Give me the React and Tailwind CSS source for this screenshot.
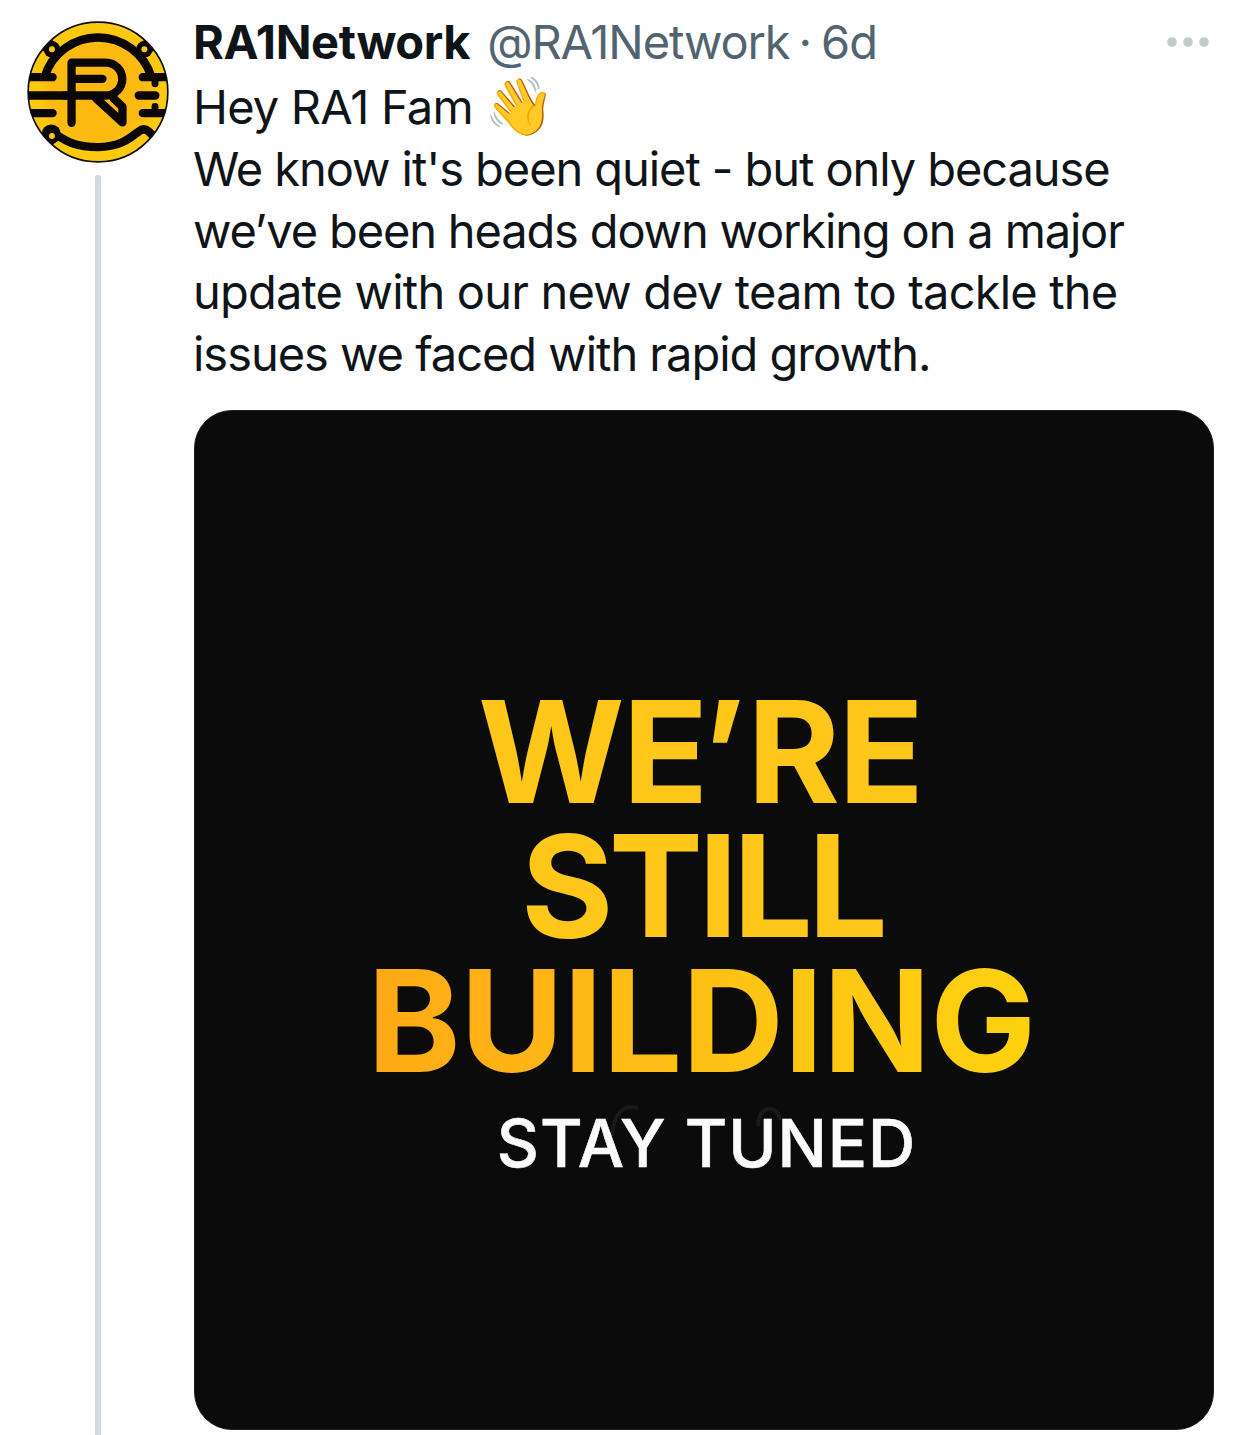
import React from 'react';

const tweet = {
  name: 'RA1Network',
  handle: '@RA1Network',
  time: '6d',
};

const bodyLines = [
  { text: "We know it's been quiet - but only because", tracking: 'tracking-[-1.07px]' },
  { text: 'we’ve been heads down working on a major', tracking: 'tracking-[-1.15px]' },
  { text: 'update with our new dev team to tackle the', tracking: 'tracking-[-0.81px]' },
  { text: 'issues we faced with rapid growth.', tracking: 'tracking-[-1.03px]' },
];

const Avatar = () => (
  <svg viewBox="36 32 427 427" className="w-[142px] h-[142px] shrink-0" role="img" aria-label="RA1Network">
    <defs>
      <radialGradient id="coin" cx="249" cy="245" r="212" gradientUnits="userSpaceOnUse">
        <stop offset="0" stopColor="#ffb60d" />
        <stop offset="0.68" stopColor="#fdbb12" />
        <stop offset="0.85" stopColor="#fdc90f" />
        <stop offset="1" stopColor="#fcca12" />
      </radialGradient>
      <clipPath id="coinClip">
        <circle cx="249.5" cy="245.5" r="210" />
      </clipPath>
    </defs>
    <circle cx="249.5" cy="245.5" r="210" fill="url(#coin)" />
    <g clipPath="url(#coinClip)" fill="none" stroke="#0a0706" strokeWidth="25" strokeLinecap="round" strokeLinejoin="round">
      {/* ring */}
      <path d="M89 200 A168 168 0 0 1 410 200" />
      <path d="M111 366 C150 390 175 411 249 411 C315 411 345 385 372 364 C382 356 392 356 402 364 L425 386" />
      <path d="M111 117 L84 92 M389 117 L416 92 M111 378 L84 403" strokeWidth="42" />
      <g fill="#0a0706" stroke="none">
        <circle cx="111" cy="117" r="25" />
        <circle cx="389" cy="117" r="25" />
        <circle cx="109" cy="372" r="29" />
      </g>
      {/* circuit bars */}
      <path d="M30 201 H113 M30 309 H113 M30 256 H170" />
      <path d="M384 201 H470 M384 309 H470 M372 256 H422" />
      <path d="M421 201 V221 M421 309 V289" strokeWidth="21" />
      {/* mark */}
      <path d="M170 338 V157 H273 A49.5 49.5 0 0 1 273 256 H150" />
      <path d="M182 206 H263" />
      <path d="M243 264 L323 337 V290 L296 264" />
    </g>
    <g fill="#fdc61a">
      <circle cx="111" cy="117" r="9" />
      <circle cx="389" cy="117" r="9" />
      <circle cx="111" cy="378" r="9" />
    </g>
    <circle cx="249.5" cy="245.5" r="210" fill="none" stroke="#0f0c06" strokeWidth="5" />
  </svg>
);

const MoreIcon = () => (
  <svg viewBox="0 0 44 12" className="w-[44px] h-[12px]" fill="#c3cacb">
    <circle cx="6" cy="6" r="4.8" />
    <circle cx="22" cy="6" r="4.8" />
    <circle cx="38" cy="6" r="4.8" />
  </svg>
);

const Poster = () => (
  <div className="relative ml-px mt-[25px] flex h-[1020px] w-[1020px] flex-col items-center rounded-[38px] border border-[#1d1f20] bg-[#0b0b0b] pt-[274px] font-bold text-[#fec719]">
    <div className="mr-[8px] text-[141.3px] leading-[134.6px] tracking-[-2px]">
      WE<span className="-ml-[5px] mr-[4px]">’</span>RE
    </div>
    <div className="mr-[4px] text-[141.3px] leading-[134.6px] tracking-[-4.9px]">STILL</div>
    <div className="mr-[5px] bg-linear-to-r from-[#ffa915] via-[#fec315] via-55% to-[#fed20f] bg-clip-text text-[141.3px] leading-[134.6px] tracking-[-0.4px] text-transparent">
      BUILDING
    </div>
    <svg viewBox="0 0 200 60" className="absolute left-[405px] top-[685px] h-[60px] w-[200px]" fill="none" stroke="#1a1a1a" strokeWidth="4">
      <path d="M12 40 C14 18 22 8 38 12" />
      <path d="M158 30 C158 8 178 8 180 24" />
    </svg>
    <div className="relative ml-[5px] mt-[15px] text-[65.3px] font-medium leading-[80px] tracking-[0.9px] text-[#fbfbfb] [-webkit-text-stroke:0.6px_#fbfbfb]">
      STAY TUNED
    </div>
  </div>
);

export default function App() {
  return (
    <div className="flex h-[1435px] w-[1242px] overflow-hidden bg-white pl-[27px] font-['Inter',sans-serif] text-[#0f1419]">
      <div className="flex w-[142px] shrink-0 flex-col items-center pt-[21px]">
        <Avatar />
        <div className="mt-[12px] w-[6px] flex-1 rounded-t-full bg-[#cfd9de]" />
      </div>

      <div className="ml-6 w-[1021px] shrink-0 pt-[11px]">
        <div className="flex h-[62px] items-start whitespace-nowrap text-[47px] leading-[62px]">
          <span className="font-bold tracking-[-0.4px]">{tweet.name}</span>
          <span className="ml-[17px] tracking-[-1.1px] text-[#536471]">{tweet.handle}</span>
          <span className="mx-[9px] text-[#536471]">·</span>
          <span className="tracking-[-1px] text-[#536471]">{tweet.time}</span>
          <div className="ml-auto mr-[4px] flex h-[62px] items-center">
            <MoreIcon />
          </div>
        </div>

        <div className="whitespace-nowrap text-[47px] leading-[61.75px]">
          <div className="flex h-[61.75px] mt-[3px]">
            <span className="tracking-[-0.8px]">Hey RA1 Fam</span>
            <span className="ml-[11px] -mt-px text-[57px]">👋</span>
          </div>
          {bodyLines.map((line) => (
            <div key={line.text} className={line.tracking}>{line.text}</div>
          ))}
        </div>

        <Poster />
      </div>
    </div>
  );
}
